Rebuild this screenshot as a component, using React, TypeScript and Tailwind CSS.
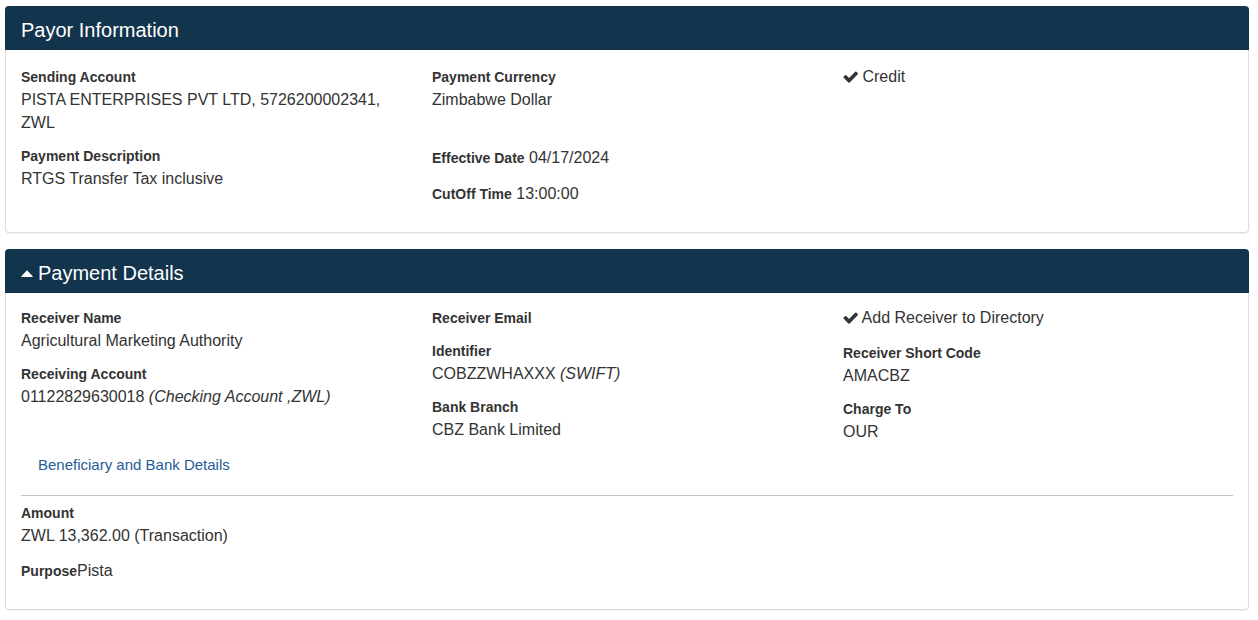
import React from "react";

const FONT = { fontFamily: '"Liberation Sans", Arial, Helvetica, sans-serif' };

function Check() {
  return (
    <svg width="15" height="12" viewBox="72 300 1600 1230" className="inline-block align-[-1px] fill-[#333]">
      <path d="M1671 566q0 40-28 68l-724 724-136 136q-28 28-68 28t-68-28l-136-136-362-362q-28-28-28-68t28-68l136-136q28-28 68-28t68 28l294 295 656-657q28-28 68-28t68 28l136 136q28 28 28 68z" />
    </svg>
  );
}

function Caret() {
  return (
    <svg width="12" height="7" viewBox="0 0 12 7" className="inline-block mr-[5px] align-[3px]">
      <path d="M6 0.3 L11.7 6.2 Q12 7 11 7 L1 7 Q0 7 0.3 6.2 Z" fill="#fff" />
    </svg>
  );
}

function Field({ label, children }: { label: string; children?: React.ReactNode }) {
  return (
    <div className="mb-[12px]">
      <div className="text-[14px] font-bold leading-[20px] text-[#333]">{label}</div>
      {children !== undefined && (
        <div className="mt-[1px] text-[16px] leading-[23px] text-[#333]">{children}</div>
      )}
    </div>
  );
}

function Inline({ label, value }: { label: string; value: string }) {
  return (
    <div className="mb-[12px] text-[16px] leading-[23px] text-[#333]">
      <span className="text-[14px] font-bold">{label}</span>
      {value}
    </div>
  );
}

function Panel({
  title,
  caret,
  bodyClass,
  children,
}: {
  title: string;
  caret?: boolean;
  bodyClass: string;
  children: React.ReactNode;
}) {
  return (
    <div className="w-[1244px] rounded-[4px] border border-[#dcdcdc] bg-white shadow-[0_1px_1px_rgba(0,0,0,0.05)]">
      <div className="-mx-px -mt-px h-[44px] rounded-t-[4px] bg-[#12344d] px-[16px] pt-[13px]">
        <div className="text-[20px] leading-[22px] text-white">
          {caret && <Caret />}
          {title}
        </div>
      </div>
      <div className={bodyClass}>{children}</div>
    </div>
  );
}

export default function App() {
  return (
    <div style={FONT} className="min-h-[620px] bg-white pl-[5px] pt-[6px] text-[#333]">
      <Panel title="Payor Information" bodyClass="px-[15px] pt-[17px] pb-[14px]">
        <div className="grid grid-cols-[411px_411px_1fr]">
          <div className="pr-[30px]">
            <Field label="Sending Account">PISTA ENTERPRISES PVT LTD, 5726200002341, ZWL</Field>
          </div>
          <div className="pr-[30px]">
            <Field label="Payment Currency">Zimbabwe Dollar</Field>
          </div>
          <div>
            <div className="text-[16px] leading-[20px]">
              <Check /> Credit
            </div>
          </div>
        </div>
        <div className="grid grid-cols-[411px_411px_1fr]">
          <div className="pr-[30px]">
            <Field label="Payment Description">RTGS Transfer Tax inclusive</Field>
          </div>
          <div className="pr-[30px]">
            <Inline label="Effective Date" value=" 04/17/2024" />
            <Inline label="CutOff Time" value=" 13:00:00" />
          </div>
          <div />
        </div>
      </Panel>

      <div className="h-[16px]" />

      <Panel title="Payment Details" caret bodyClass="px-[15px] pt-[15px] pb-[14px]">
        <div className="grid grid-cols-[411px_411px_1fr]">
          <div className="pr-[30px]">
            <Field label="Receiver Name">Agricultural Marketing Authority</Field>
            <Field label="Receiving Account">
              01122829630018 <i>(Checking Account ,ZWL)</i>
            </Field>
          </div>
          <div className="pr-[30px]">
            <div className="mb-[13px] text-[14px] font-bold leading-[20px]">Receiver Email</div>
            <Field label="Identifier">
              COBZZWHAXXX <i>(SWIFT)</i>
            </Field>
            <Field label="Bank Branch">CBZ Bank Limited</Field>
          </div>
          <div>
            <div className="mb-[15px] text-[16px] leading-[20px]">
              <Check /> Add Receiver to Directory
            </div>
            <Field label="Receiver Short Code">AMACBZ</Field>
            <Field label="Charge To">OUR</Field>
          </div>
        </div>
        <div className="pl-[17px] text-[15px] leading-[20px]">
          <a className="text-[#1f5c99] cursor-pointer">Beneficiary and Bank Details</a>
        </div>
        <div className="mt-[20px] mb-[7px] border-t border-[#c4c4c4]" />
        <Field label="Amount">ZWL 13,362.00 (Transaction)</Field>
        <div className="mt-[1px]">
          <Inline label="Purpose" value="Pista" />
        </div>
      </Panel>
    </div>
  );
}
